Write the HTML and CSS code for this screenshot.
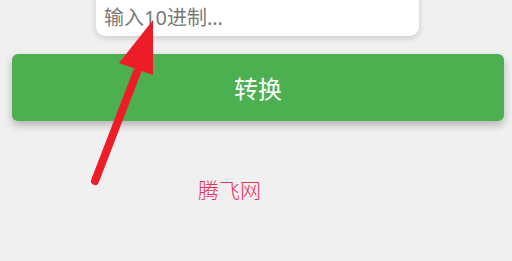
FILE: index.html
```html
<!DOCTYPE html>
<html lang="zh">
<head>
<meta charset="utf-8">
<link rel="stylesheet" href="styles.css">
</head>
<body>
<div class="page">
  <div class="input-box"><span class="placeholder">输入10进制...</span></div>
  <div class="btn">转换</div>
  <div class="brand">腾飞网</div>
</div>
<svg class="arrow" width="512" height="261" viewBox="0 0 512 261">
  <line x1="95" y1="181" x2="137" y2="72" stroke="#ee1c27" stroke-width="8" stroke-linecap="round"/>
  <polygon points="153,20 119,63 153,75" fill="#ee1c27"/>
</svg>
</body>
</html>
```
FILE: styles.css
```css
html, body {
  margin: 0;
  padding: 0;
  background: #f0f0f0;
  overflow: hidden;
}
body {
  width: 512px;
  height: 261px;
  position: relative;
  font-family: "Noto Sans", "Noto Sans CJK SC", sans-serif;
}
.page {
  display: flex;
  flex-direction: column;
}
.input-box {
  margin: -12px 0 0 96px;
  width: 323px;
  height: 48px;
  box-sizing: border-box;
  padding: 18px 8px 6px;
  background: #fff;
  border-radius: 9px;
  box-shadow: 0 2px 6px rgba(0,0,0,0.16);
}
.placeholder {
  display: block;
  font-size: 20px;
  line-height: 24px;
  color: #7a7a7a;
}
.btn {
  margin: 18px 0 0 12px;
  width: 492px;
  height: 67px;
  background: #4caf50;
  border-radius: 6px;
  color: #fff;
  font-size: 24px;
  display: flex;
  align-items: center;
  justify-content: center;
  box-shadow: 0 4px 8px rgba(0,0,0,0.26);
}
.brand {
  margin: 57px 0 0 198px;
  font-size: 21px;
  line-height: 24px;
  font-weight: 300;
  color: #ea2f5a;
}
.arrow {
  position: absolute;
  left: 0;
  top: 0;
}
```
